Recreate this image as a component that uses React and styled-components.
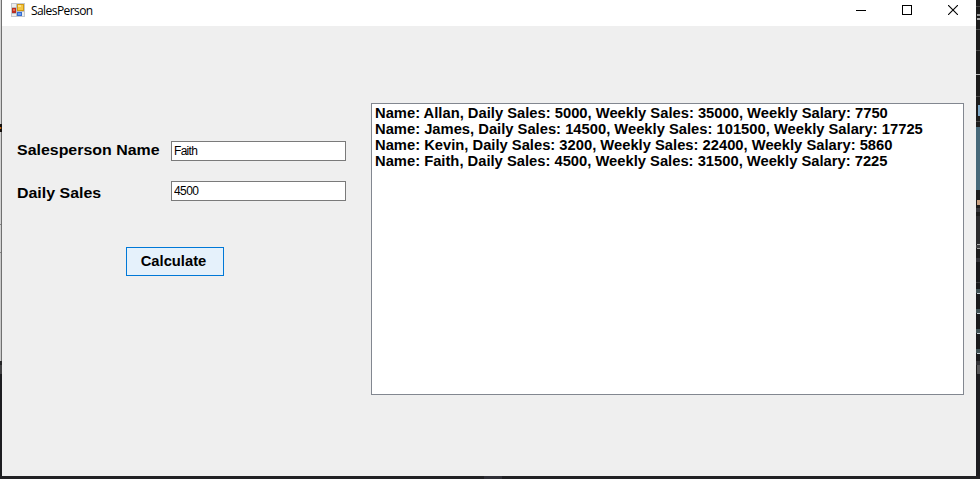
import React from "react";
import styled, { createGlobalStyle } from "styled-components";

const GlobalStyle = createGlobalStyle`
  * { box-sizing: border-box; }
  body { margin: 0; overflow: hidden; background: #1e1e1e; }
`;

const Desktop = styled.div`
  width: 980px;
  height: 479px;
  display: grid;
  grid-template-columns: 2px 974px 4px;
  grid-template-rows: 476px 3px;
  background: #202123;
  color: #000;
  font-family: "Liberation Sans", Arial, sans-serif;
`;

const EdgeStrip = styled.div`
  display: flex;
  flex-direction: column;
  overflow: hidden;
  background: #1c1c1c;
`;

const EdgeBand = styled.span`
  flex: 0 0 ${({ $size }) => $size}px;
  margin-left: ${({ $inset }) => $inset || 0}px;
  background: ${({ $color }) => $color};
  border-right: ${({ $line }) => ($line ? `1px solid ${$line}` : "none")};
`;

const BottomEdge = styled.div`
  grid-column: 1 / -1;
  display: flex;
  padding-left: 484px;
  background: #212124;
`;

const BottomTab = styled.span`
  width: 18px;
  background: #303037;
`;

const Window = styled.main`
  display: flex;
  flex-direction: column;
  background: #efefef;
`;

const TitleBar = styled.header`
  height: 26px;
  flex: none;
  display: flex;
  background: #fff;
  padding-left: 9px;
`;

const AppIcon = styled.svg`
  display: block;
  flex: none;
  margin-top: 3px;
`;

const Title = styled.h1`
  margin: 2px 0 0 6px;
  flex: 1;
  font: 400 12px/18px "Open Sans", sans-serif;
  letter-spacing: -0.57px;
`;

const Controls = styled.div`
  display: flex;
  width: 137px;
  height: 20px;
`;

const ControlButton = styled.button`
  display: flex;
  align-items: flex-start;
  width: 46px;
  height: 20px;
  padding: 5px 0 0 17px;
  border: 0;
  background: none;
  flex: none;
`;

const Content = styled.div`
  flex: 1;
  display: flex;
  align-items: flex-start;
  padding: 77px 0 0 15px;
`;

const Form = styled.form`
  width: 354px;
  flex: none;
  padding-top: 38px;
`;

const Field = styled.div`
  display: flex;
  height: 40px;
`;

const Label = styled.label`
  width: 154px;
  flex: none;
  padding-top: ${({ $drop }) => $drop}px;
  font: 700 15px/17px "Liberation Sans", Arial, sans-serif;
  white-space: nowrap;
  transform: scaleX(1.062);
  transform-origin: left;
`;

const TextInput = styled.input`
  position: relative;
  width: 175px;
  height: 20px;
  padding: 0 2px 1px;
  border: 1px solid #7a7a7a;
  border-radius: 0;
  outline: 0;
  background: #fff;
  color: #000;
  font: 400 12px "Liberation Sans", Arial, sans-serif;
  letter-spacing: ${({ $tracking }) => $tracking}px;
`;

const CalculateButton = styled.button`
  display: block;
  width: 98px;
  height: 29px;
  margin: 26px 0 0 109px;
  padding: 0 3px 1px 0;
  border: 1px solid #0078d7;
  border-radius: 0;
  background: #e5f1fb;
  color: #000;
  font: 700 14px "Liberation Sans", Arial, sans-serif;
`;

const ButtonText = styled.span`
  display: block;
  transform: scaleX(1.053);
`;

const ResultList = styled.ul`
  width: 593px;
  height: 292px;
  margin: 0;
  padding: 1px 3px;
  list-style: none;
  border: 1px solid #828790;
  background: #fff;
`;

const ResultRow = styled.li`
  height: 16px;
  font: 700 14px/16px "Liberation Sans", Arial, sans-serif;
  white-space: nowrap;
  transform: scaleX(1.053);
  transform-origin: left;
`;

const leftBands = [
  [124, "#d2d2d2", "#707070"], [3, "#15110f", "#15110f"],
  [2, "#c56a12", "#3a2410"], [3, "#15110f", "#15110f"],
  [92, "#d2d2d2", "#707070"], [1, "#858585", "#707070"],
  [27, "#d2d2d2", "#707070"], [1, "#858585", "#707070"],
  [108, "#c9c9c9", "#707070"], [4, "#252527"], [9, "#414143"],
  [102, "#1c1d20"],
];

const rightBands = [
  [6, "#1c1c1c"], [1, "#484848"], [7, "#1c1c1c"], [2, "#999", 1],
  [2, "#1c1c1c"], [2, "#aaa", 1], [9, "#1c1c1c"], [1, "#484848"],
  [20, "#1c1c1c"], [1, "#484848"], [23, "#1c1c1c"], [1, "#bbb"],
  [21, "#1c1c1c"], [1, "#484848"], [8, "#1c1c1c"], [11, "#7ba5c4", 2],
  [5, "#1c1c1c"], [1, "#484848"], [5, "#1c1c1c"], [63, "#466879"],
  [10, "#1c1c1c"], [5, "#c9a182", 1], [3, "#1c1c1c"], [4, "#36363a"],
  [4, "#1c1c1c"], [28, "#2b2b2d"], [1, "#aaa", 1], [3, "#3b3b3d"],
  [1, "#999", 1], [9, "#1c1c1c"], [4, "#333337"], [20, "#19191b"],
  [1, "#38383b"], [6, "#19191b"], [4, "#3f5053"], [1, "#bcc6cc", 1],
  [15, "#19191b"], [4, "#3f5053"], [1, "#bcc6cc", 1],
  [15, "#19191b"], [4, "#3f5053"], [1, "#bcc6cc", 1],
  [15, "#19191b"], [4, "#3f5053"], [1, "#bcc6cc", 1],
  [7, "#19191b"], [4, "#333337"], [9, "#555557", 1], [108, "#1d1d20"],
];

const records = [
  { name: "Allan", daily: 5000, weekly: 35000, salary: 7750 },
  { name: "James", daily: 14500, weekly: 101500, salary: 17725 },
  { name: "Kevin", daily: 3200, weekly: 22400, salary: 5860 },
  { name: "Faith", daily: 4500, weekly: 31500, salary: 7225 },
];

function FormIcon() {
  return (
    <AppIcon width="14" height="14" viewBox="0 0 14 14" shapeRendering="crispEdges">
      <rect x=".5" y=".5" width="13" height="13" fill="#ededed" stroke="#c4c8ce" />
      <path d="M5.5 1v12M1 4.5h4M1 10.5h4M6 8.5h7" stroke="#b9bdc4" />
      <rect x="1" y="5" width="4" height="5" fill="#bd2d20" />
      <rect x="2" y="6" width="2" height="2" fill="#e36c55" />
      <rect x="6" y="1" width="7" height="7" fill="#d29a13" />
      <rect x="7" y="2" width="5" height="5" fill="#f6c744" />
      <rect x="7" y="2" width="3" height="2" fill="#ffe38a" />
      <rect x="6" y="9" width="5" height="4" fill="#346cd0" />
      <rect x="7" y="10" width="3" height="2" fill="#6c9df0" />
    </AppIcon>
  );
}

export default function App() {
  return (
    <>
      <GlobalStyle />
      <Desktop>
        <EdgeStrip>
          {leftBands.map(([size, color, line], i) => (
            <EdgeBand key={i} $size={size} $color={color} $line={line} />
          ))}
        </EdgeStrip>
        <Window>
          <TitleBar>
            <FormIcon />
            <Title>SalesPerson</Title>
            <Controls>
              <ControlButton aria-label="Minimize">
                <svg width="10" height="10"><path d="M0 5.5h10" stroke="#000" shapeRendering="crispEdges" /></svg>
              </ControlButton>
              <ControlButton aria-label="Maximize">
                <svg width="10" height="10"><rect x=".5" y=".5" width="9" height="9" fill="none" stroke="#000" shapeRendering="crispEdges" /></svg>
              </ControlButton>
              <ControlButton aria-label="Close">
                <svg width="10" height="10"><path d="M0 0l10 10M10 0L0 10" fill="none" stroke="#000" strokeWidth="1.1" /></svg>
              </ControlButton>
            </Controls>
          </TitleBar>
          <Content>
            <Form onSubmit={(e) => e.preventDefault()}>
              <Field>
                <Label htmlFor="person" $drop={0}>Salesperson Name</Label>
                <TextInput id="person" defaultValue="Faith" $tracking={-0.7} />
              </Field>
              <Field>
                <Label htmlFor="sales" $drop={3}>Daily Sales</Label>
                <TextInput id="sales" defaultValue="4500" $tracking={-0.6} />
              </Field>
              <CalculateButton type="submit"><ButtonText>Calculate</ButtonText></CalculateButton>
            </Form>
            <ResultList>
              {records.map((r) => (
                <ResultRow key={r.name}>
                  Name: {r.name}, Daily Sales: {r.daily}, Weekly Sales: {r.weekly}, Weekly Salary: {r.salary}
                </ResultRow>
              ))}
            </ResultList>
          </Content>
        </Window>
        <EdgeStrip>
          {rightBands.map(([size, color, inset], i) => (
            <EdgeBand key={i} $size={size} $color={color} $inset={inset} />
          ))}
        </EdgeStrip>
        <BottomEdge><BottomTab /></BottomEdge>
      </Desktop>
    </>
  );
}
